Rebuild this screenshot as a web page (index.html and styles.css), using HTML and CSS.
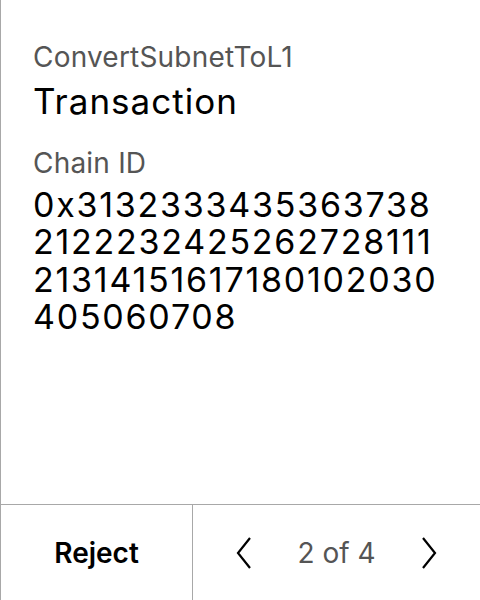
FILE: index.html
```html
<!DOCTYPE html>
<html>
<head>
<meta charset="utf-8">
<link rel="stylesheet" href="styles.css">
</head>
<body>
<div class="screen">
  <main class="content">
    <div class="subtitle">ConvertSubnetToL1</div>
    <div class="title">Transaction</div>
    <div class="label">Chain ID</div>
    <div class="value">0x3132333435363738<br>2122232425262728111<br>21314151617180102030<br>405060708</div>
  </main>
  <footer class="footer">
    <div class="reject">Reject</div>
    <div class="pager">
      <svg class="chev" width="18" height="32" viewBox="0 0 18 32"><path d="M15 1 L3 16 L15 31" fill="none" stroke="#000" stroke-width="2.2"/></svg>
      <span class="count">2 of 4</span>
      <svg class="chev" width="18" height="32" viewBox="0 0 18 32"><path d="M3 1 L15 16 L3 31" fill="none" stroke="#000" stroke-width="2.2"/></svg>
    </div>
  </footer>
</div>
</body>
</html>
```
FILE: styles.css
```css
html, body { margin: 0; padding: 0; background: #fff; }
body { font-family: Inter, "Noto Sans", sans-serif; }
.screen {
  width: 480px; height: 600px; box-sizing: border-box;
  border-left: 1px solid #a8a8a8;
  display: flex; flex-direction: column;
}
.content { flex: 1; padding: 40px 0 0 32px; }
.subtitle { font-size: 28px; color: #555; line-height: 34px; letter-spacing: 0.2px; }
.title { font-size: 35px; color: #000; line-height: 42px; margin-top: 6px; letter-spacing: 1px; }
.label { font-size: 28px; color: #555; line-height: 34px; margin-top: 24px; letter-spacing: 0.2px; }
.value { font-size: 34px; color: #000; line-height: 37.3px; margin-top: 6px; letter-spacing: 1.75px; }
.footer {
  height: 95px; border-top: 1px solid #a8a8a8;
  display: flex;
}
.reject {
  width: 191px; border-right: 1px solid #a8a8a8;
  display: flex; align-items: center; justify-content: center;
  font-size: 28px; font-weight: 600; color: #000;
}
.pager { flex: 1; display: flex; align-items: center; justify-content: space-between; padding: 0 42px 0 42px; }
.count { font-size: 28px; color: #555; }
```
